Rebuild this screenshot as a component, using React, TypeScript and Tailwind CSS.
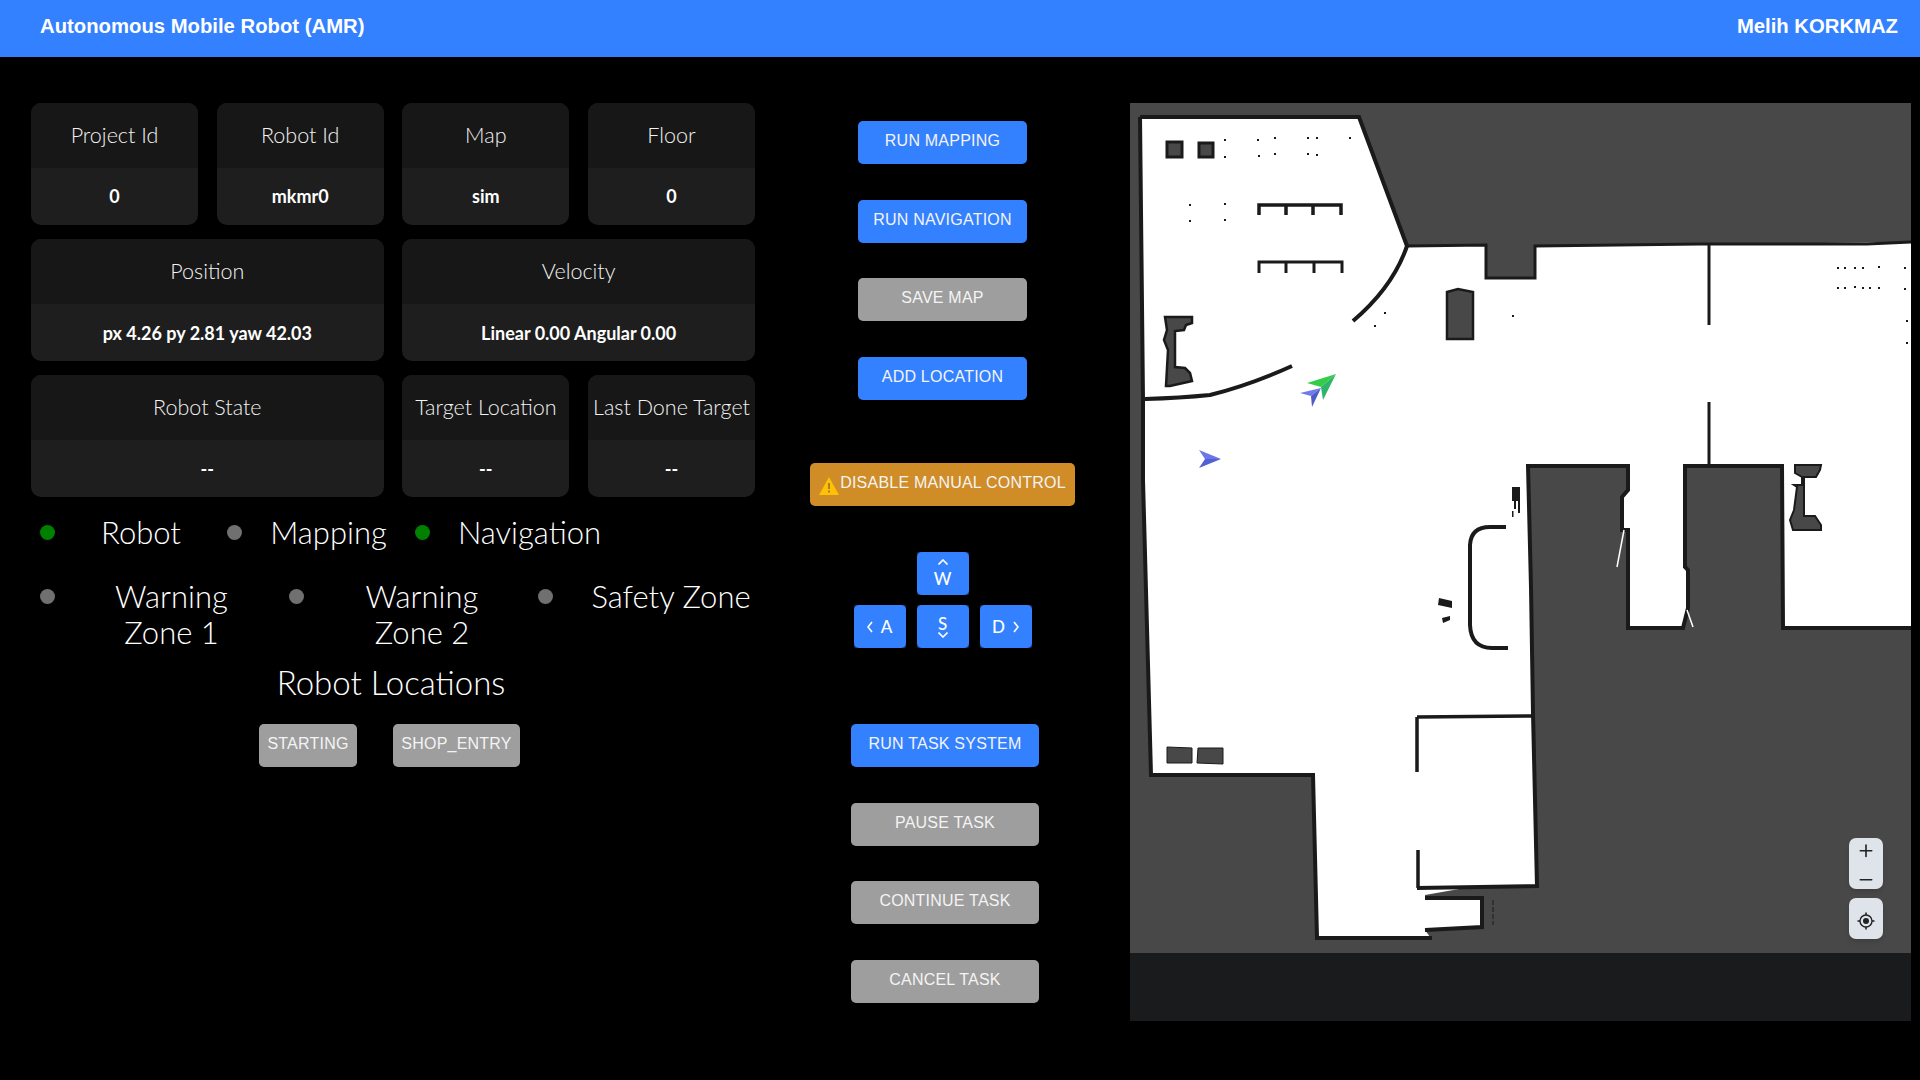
import { Minus, Plus } from "lucide-react"

const labelFont = "font-['Lato','Noto_Sans',sans-serif]"
const buttonFont = "font-['Liberation_Sans',Arial,sans-serif]"

const InfoCard = ({ title, value, wide }: { title: string; value: string; wide?: boolean }) => (
  <div className={`${wide ? "col-span-2" : ""} flex flex-col overflow-hidden rounded-[10px] bg-[#1e1e1e]`}>
    <div className="flex h-[65px] items-center justify-center bg-[#171717] pb-[1px] text-[21.5px] font-light whitespace-nowrap text-[#f2f2f2]">{title}</div>
    <div className="flex flex-1 items-center justify-center pt-[1px] text-[18px] font-bold text-white">{value}</div>
  </div>
)

const Status = ({ on, width, box, children }: { on?: boolean; width: string; box: string; children: React.ReactNode }) => (
  <div className={`flex shrink-0 items-start ${width}`}>
    <span className={`mt-[11px] size-[15px] shrink-0 rounded-full ${on ? "bg-[#008000]" : "bg-[#707070]"}`} />
    <span className={`${box} shrink-0 text-center text-[31px] leading-[36px] font-light text-white`}>{children}</span>
  </div>
)

const Btn = ({ children, gray, className = "" }: { children: React.ReactNode; gray?: boolean; className?: string }) => (
  <button className={`flex h-[43px] items-center justify-center rounded-[5px] pb-[3px] text-[16px] tracking-[0.22px] text-[#f4f4f4] ${gray ? "bg-[#9e9e9e]" : "bg-[#3381ff]"} ${buttonFont} ${className}`}>
    {children}
  </button>
)

const Key = ({ children, flexCol }: { children: React.ReactNode; flexCol?: boolean }) => (
  <div className="h-[43px] w-[52px] rounded-[2px] bg-[#1c3c74]">
    <div className={`flex h-full w-full items-center justify-center rounded-[5px] bg-[#3381ff] text-[17px] font-medium text-white ${flexCol ? "flex-col" : "gap-[8px]"}`}>
      {children}
    </div>
  </div>
)

const Chevron = ({ d, w = 10, h = 6 }: { d: string; w?: number; h?: number }) => (
  <svg width={w} height={h} viewBox={`0 0 ${w} ${h}`} fill="none" stroke="white" strokeWidth="1.6">
    <path d={d} />
  </svg>
)

const dots = [
  [1225, 140], [1225, 157], [1258, 140], [1259, 156], [1275, 138], [1275, 154], [1308, 138], [1308, 154], [1317, 138], [1317, 155], [1350, 138],
  [1190, 205], [1190, 221], [1225, 204], [1225, 220],
  [1385, 313], [1375, 326], [1513, 316],
  [1838, 268], [1845, 268], [1855, 268], [1863, 268], [1879, 267], [1905, 268],
  [1838, 288], [1845, 288], [1855, 287], [1863, 288], [1870, 288], [1879, 288], [1905, 289],
  [1907, 321], [1907, 343],
]

const Arrow = ({ top, bottom, tip, wing, notch, tail }: { top: string; bottom: string; tip: string; wing: string; notch: string; tail: string }) => (
  <>
    <polygon points={`${tip} ${wing} ${notch}`} fill={top} />
    <polygon points={`${tip} ${notch} ${tail}`} fill={bottom} />
  </>
)

const MapDrawing = () => (
  <svg viewBox="1130 103 781 850" className="block h-[850px] w-[781px]">
    <rect x="1130" y="103" width="781" height="850" fill="#484848" />
    <polygon
      fill="#fff"
      points="1140,117 1359,117 1407,246 1486,246 1486,278 1535,278 1535,246 1911,242 1911,628 1783,628 1782,466 1685,466 1685,567 1688,570 1688,608 1683,628 1628,628 1628,553 1626,530 1622,530 1622,497 1628,490 1628,466 1528,466 1531,587 1533,713 1537,886 1465,888 1425,895 1425,898 1482,898 1482,927 1425,930 1430,937 1317,938 1313,775 1151,775 1143,480 1143,400"
    />
    <g fill="none" stroke="#1a1a1a" strokeWidth="4">
      <polyline points="1140,117 1359,117 1407,246" />
      <polyline points="1407,246 1486,245 1486,278 1535,278 1535,246 1700,244 1867,244 1911,242" strokeWidth="3" />
      <polyline points="1911,628 1783,628 1782,466 1685,466 1685,567 1688,570 1688,608 1683,628 1628,628 1628,553" />
      <polyline points="1628,553 1628,530 1622,530 1622,497 1628,490 1628,466 1528,466 1531,587 1533,713 1537,886 1417,888" />
      <polyline points="1425,898 1482,898 1482,927 1425,930" />
      <polyline points="1432,938 1317,938 1313,775 1151,775 1143,480 1143,400 1140,117" />
      <path d="M1353 321 Q1393 287 1407 246" />
      <path d="M1292 366 Q1250 385 1210 395 Q1180 398 1145 399" />
      <path d="M1506 527 L1490 527 Q1471 527 1470 545 L1470 625 Q1471 648 1492 648 L1508 648" />
      <path d="M1709 244 L1709 325 M1709 402 L1709 466" strokeWidth="3" />
      <path d="M1417 717 L1532 716 M1417 717 L1417 772 M1418 850 L1418 888" strokeWidth="3.5" />
      <path d="M1259 215 L1259 205 L1341 205 L1341 215 M1286 215 L1286 205 M1313 215 L1313 205" strokeWidth="3.5" />
      <path d="M1259 273 L1259 262 L1342 262 L1342 273 M1286 273 L1286 262 M1314 273 L1314 262" strokeWidth="3" />
      <path d="M1493 900 L1493 925" strokeWidth="1" strokeDasharray="5 2" />
    </g>
    <g fill="#484848" stroke="#1a1a1a">
      <rect x="1167" y="142" width="15" height="15" strokeWidth="3" />
      <rect x="1199" y="143" width="14" height="14" strokeWidth="3" />
      <polygon points="1447,292 1458,289 1473,292 1473,339 1447,339" strokeWidth="2.5" />
      <polygon points="1165,317 1192,317 1192,323 1186,325 1184,330 1175,331 1175,367 1185,368 1190,373 1192,381 1170,386 1166,386 1168,350 1164,340 1167,330" strokeWidth="2.5" />
      <polygon points="1167,747 1192,748 1192,763 1167,763" strokeWidth="1" />
      <polygon points="1198,748 1223,748 1223,764 1197,763" strokeWidth="1" />
      <polygon points="1795,465 1821,465 1820,470 1816,477 1804,477 1804,516 1815,516 1821,525 1821,530 1793,530 1790,520 1794,510 1797,487 1794,485 1802,485 1802,477 1795,473" strokeWidth="2" />
    </g>
    <g fill="#1a1a1a">
      <rect x="1512" y="487" width="8" height="14" />
      <rect x="1514" y="501" width="2" height="8" />
      <rect x="1518" y="501" width="2" height="12" />
      <rect x="1512" y="511" width="1.5" height="6" />
      <polygon points="1439,598 1452,601 1452,608 1438,605" />
      <polygon points="1442,618 1450,616 1450,620 1443,623" />
      {dots.map(([x, y]) => (
        <rect key={`${x}-${y}`} x={x - 1} y={y - 1} width="2" height="2" />
      ))}
    </g>
    <path d="M1624 530 L1617 567 M1687 610 L1693 627" stroke="#fff" strokeWidth="1.5" />
    <Arrow tip="1221,459" wing="1199,450" notch="1205,459" tail="1199,468" top="#6a76ea" bottom="#5360d4" />
    <Arrow tip="1336,374" wing="1307,383" notch="1321,387" tail="1323,400" top="#35cc47" bottom="#2fb56a" />
    <Arrow tip="1321,388" wing="1300,393" notch="1311,396" tail="1312,407" top="#6f7bec" bottom="#4e5bc6" />
  </svg>
)

export default function App() {
  return (
    <div className={`min-h-screen w-[1920px] overflow-hidden bg-black ${labelFont}`}>
      <header className={`flex h-[57px] items-center justify-between bg-[#3381ff] pr-[22px] pb-[5px] pl-[40px] text-[20.3px] font-bold text-white ${buttonFont}`}>
        <span>Autonomous Mobile Robot (AMR)</span>
        <span>Melih KORKMAZ</span>
      </header>

      <main className="flex pl-[31px]">
        <section className="w-[724px] pt-[46px]">
          <div className="grid auto-rows-[121.7px] grid-cols-4 gap-x-[18.67px] gap-y-[14.5px]">
            <InfoCard title="Project Id" value="0" />
            <InfoCard title="Robot Id" value="mkmr0" />
            <InfoCard title="Map" value="sim" />
            <InfoCard title="Floor" value="0" />
            <InfoCard wide title="Position" value="px 4.26 py 2.81 yaw 42.03" />
            <InfoCard wide title="Velocity" value="Linear 0.00 Angular 0.00" />
            <InfoCard wide title="Robot State" value="--" />
            <InfoCard title="Target Location" value="--" />
            <InfoCard title="Last Done Target" value="--" />
          </div>

          <div className="mt-[17px] flex pl-[9px]">
            <Status on width="w-[187px]" box="w-[172px]">Robot</Status>
            <Status width="w-[188px]" box="w-[173px]">Mapping</Status>
            <Status on width="w-[214px]" box="w-[199px]">Navigation</Status>
          </div>
          <div className="mt-[28px] flex pl-[9px]">
            <Status width="w-[249px]" box="w-[233px]">Warning<br />Zone 1</Status>
            <Status width="w-[249px]" box="w-[236px]">Warning<br />Zone 2</Status>
            <Status width="w-[217px]" box="w-[236px]">Safety Zone</Status>
          </div>

          <h2 className="mt-[14px] pr-[4px] text-center text-[33px] leading-[36px] font-light text-white">Robot Locations</h2>
          <div className="mt-[24px] flex justify-center gap-[36px] pr-[7px]">
            <Btn gray className="w-[98px]">STARTING</Btn>
            <Btn gray className="w-[127px]">SHOP_ENTRY</Btn>
          </div>
        </section>

        <section className="flex w-[375px] flex-col items-center pt-[64px]">
          <div className="flex flex-col gap-[35.7px]">
            <Btn className="w-[169px]">RUN MAPPING</Btn>
            <Btn className="w-[169px]">RUN NAVIGATION</Btn>
            <Btn gray className="w-[169px]">SAVE MAP</Btn>
            <Btn className="w-[169px]">ADD LOCATION</Btn>
          </div>

          <Btn className="mt-[63px] w-[265px] gap-[1px] !bg-[#d08c26]">
            <svg width="20" height="18" viewBox="0 0 20 18" className="mt-[6px]">
              <polygon points="10,0 20,18 0,18" fill="#ffc107" />
              <rect x="9" y="6" width="2" height="6" fill="#a8801a" />
              <rect x="9" y="13.5" width="2" height="2" fill="#a8801a" />
            </svg>
            DISABLE MANUAL CONTROL
          </Btn>

          <div className="mt-[46px] flex flex-col items-center gap-[10px]">
            <Key flexCol>
              <Chevron d="M0.5 5.5 L5 1 L9.5 5.5" />
              <span className="mt-[5px] leading-[18px]">W</span>
            </Key>
            <div className="flex gap-[11px]">
              <Key>
                <Chevron w={6} h={12} d="M5 1 L1 6 L5 11" />
                A
              </Key>
              <Key flexCol>
                <span className="leading-[16px]">S</span>
                <Chevron d="M0.5 0.5 L5 5 L9.5 0.5" />
              </Key>
              <Key>
                D
                <Chevron w={6} h={12} d="M1 1 L5 6 L1 11" />
              </Key>
            </div>
          </div>

          <div className="mt-[76px] flex flex-col gap-[35.7px] pl-[5px]">
            <Btn className="w-[188px]">RUN TASK SYSTEM</Btn>
            <Btn gray className="w-[188px]">PAUSE TASK</Btn>
            <Btn gray className="w-[188px]">CONTINUE TASK</Btn>
            <Btn gray className="w-[188px]">CANCEL TASK</Btn>
          </div>
        </section>

        <section className="w-[781px] pt-[46px]">
          <div className="relative">
            <MapDrawing />
            <div className="absolute top-[735px] right-[28px] flex flex-col gap-[9px]">
              <div className="flex h-[51px] w-[34px] flex-col items-center gap-[9px] rounded-[7px] bg-[#dfe4ea] pt-[3px] text-[#222] shadow-md">
                <Plus size={22} strokeWidth={2} />
                <Minus size={22} strokeWidth={2} />
              </div>
              <div className="flex h-[41px] w-[34px] items-center justify-center rounded-[7px] bg-[#dfe4ea] pt-[5px] shadow-md">
                <svg width="18" height="18" viewBox="0 0 18 18" fill="none" stroke="#222" strokeWidth="1.4">
                  <circle cx="9" cy="9" r="6" />
                  <circle cx="9" cy="9" r="3" fill="#222" stroke="none" />
                  <path d="M9 0.5 V3 M9 15 V17.5 M0.5 9 H3 M15 9 H17.5" strokeWidth="1.6" />
                </svg>
              </div>
            </div>
          </div>
          <div className="h-[68px] w-[781px] bg-[#1a1b1d]" />
        </section>
      </main>
    </div>
  )
}
